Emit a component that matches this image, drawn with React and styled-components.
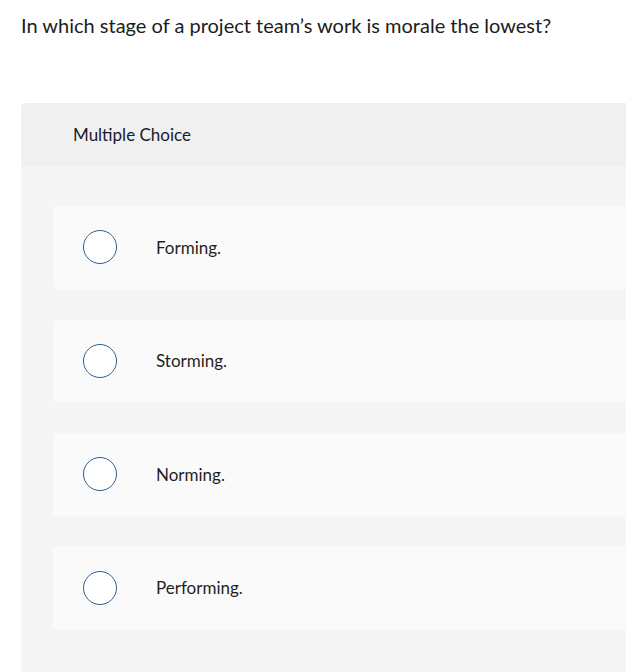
import React from 'react';
import styled, { createGlobalStyle } from 'styled-components';

const GlobalStyle = createGlobalStyle`
  html, body {
    margin: 0;
    padding: 0;
    background: #ffffff;
    overflow: hidden;
  }
  body {
    font-family: Lato, "Open Sans", Arial, sans-serif;
    color: #1f1f1f;
  }
`;

const options = ['Forming.', 'Storming.', 'Norming.', 'Performing.'];

const App = () => {
  return (
    <Page>
      <GlobalStyle />
      <Question>In which stage of a project team’s work is morale the lowest?</Question>
      <Card>
        <CardHeader>Multiple Choice</CardHeader>
        <CardBody>
          {options.map((label) => (
            <Option key={label}>
              <Radio />
              <Label>{label}</Label>
            </Option>
          ))}
        </CardBody>
      </Card>
    </Page>
  );
};

const Page = styled.div`
  width: 626px;
  height: 672px;
  overflow: hidden;
  padding: 12px 0 0 21px;
  box-sizing: border-box;
`;
const Question = styled.div`
  font-size: 20px;
  line-height: 26px;
  color: #1c1c1c;
  margin-bottom: 65px;
`;
const Card = styled.div`
  width: 640px;
  border-radius: 4px 0 0 0;
  overflow: hidden;
`;
const CardHeader = styled.div`
  height: 63px;
  display: flex;
  align-items: center;
  padding-left: 52px;
  background: #f0f0f0;
  font-size: 17px;
  color: #1a1a2a;
`;
const CardBody = styled.div`
  background: #f5f5f5;
  padding: 40px 0 60px 32px;
  display: flex;
  flex-direction: column;
  gap: 31px;
`;
const Option = styled.div`
  height: 82.5px;
  display: flex;
  align-items: center;
  padding-left: 30px;
  background: #fafafa;
  border-radius: 4px 0 0 4px;
`;
const Radio = styled.span`
  width: 32px;
  height: 32px;
  border: 1.5px solid #2f5f8f;
  border-radius: 50%;
  background: #ffffff;
  flex-shrink: 0;
`;
const Label = styled.span`
  margin-left: 39px;
  font-size: 17px;
  color: #1f1f1f;
`;

export default App;
